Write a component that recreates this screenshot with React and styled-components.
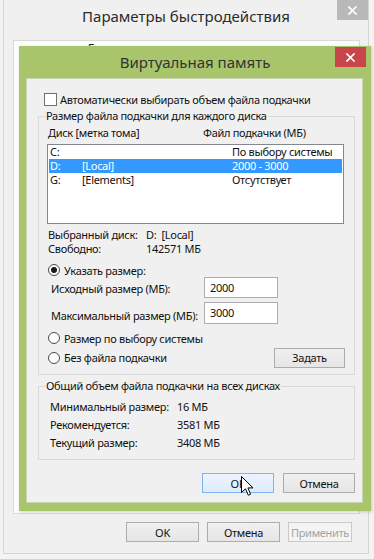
import React from 'react';
import styled, { createGlobalStyle } from 'styled-components';

const GlobalStyle = createGlobalStyle`
  html, body { margin: 0; padding: 0; background: #f3f3f3; }
  body {
    font-family: "Noto Sans", "Segoe UI", sans-serif;
    font-size: 11px;
    letter-spacing: -0.3px;
    color: #111;
  }
  * { box-sizing: border-box; }
`;

const Screen = styled.div`
  position: relative;
  width: 374px;
  height: 559px;
  overflow: hidden;
  background: #f3f3f3;
`;

const OuterWindow = styled.div`
  margin-left: 3px;
  width: 366px;
  height: 554px;
  border: 1px solid #d6d6d6;
  border-top: none;
  background: #f0f0f0;
  display: flex;
  flex-direction: column;
`;

const TitleBar = styled.div`
  height: ${p => p.$h}px;
  flex: none;
  display: grid;
  grid-template-columns: 1fr auto 1fr;
  align-items: start;
  padding: ${p => p.$pad};
`;

const WindowTitle = styled.div`
  grid-column: 2;
  font-size: 15px;
  letter-spacing: 0;
  line-height: ${p => p.$lh}px;
  color: ${p => p.$color};
  white-space: nowrap;
`;

const CloseButton = styled.div`
  grid-column: 3;
  justify-self: end;
  width: 31px;
  height: 20px;
  background: ${p => p.$bg};
  display: flex;
  align-items: center;
  justify-content: center;
`;

const TabArea = styled.div`
  padding: 0 8px 0 9px;
`;

const TabPanel = styled.div`
  height: 474px;
  border: 1px solid #d9d9d9;
  background: #fcfcfc;
  padding: 1px 0 0 74px;
`;

const TabCaption = styled.div`
  line-height: 12px;
  color: #222;
`;

const ButtonBar = styled.div`
  display: flex;
  justify-content: flex-end;
  gap: ${p => p.$gap}px;
  margin-top: ${p => p.$mt}px;
  padding-right: ${p => p.$pr}px;
`;

const Button = styled.div`
  width: ${p => p.$w}px;
  height: 20px;
  border: 1px solid ${p => (p.$hover ? '#7eb4ea' : p.$disabled ? '#cacaca' : '#acacac')};
  background: ${p =>
    p.$hover
      ? 'linear-gradient(#ecf4fc, #dcecfc)'
      : p.$disabled
      ? '#f4f4f4'
      : 'linear-gradient(#f0f0f0, #e5e5e5)'};
  color: ${p => (p.$disabled ? '#a3a3a3' : '#111')};
  display: flex;
  align-items: center;
  justify-content: center;
  line-height: 1;
`;

const Dialog = styled.div`
  position: absolute;
  left: 19px;
  top: 46px;
  width: 352px;
  height: 465px;
  background: #a8c56b;
  display: flex;
  flex-direction: column;
  box-shadow: 1px 1px 3px rgba(0, 0, 0, 0.18);
`;

const Client = styled.div`
  flex: 1;
  margin: 0 8px 8px 7px;
  background: #f0f0f0;
  border: 1px solid #c9d4b2;
  padding: 0 7px 0 11px;
  display: flex;
  flex-direction: column;
`;

const CheckRow = styled.label`
  margin-top: 12px;
  height: 16px;
  padding-left: 6px;
  display: flex;
  align-items: center;
  gap: 3px;
  white-space: nowrap;
`;

const CheckBox = styled.span`
  width: 13px;
  height: 13px;
  border: 1px solid #707070;
  background: #fff;
  flex: none;
`;

const Group = styled.fieldset`
  margin: ${p => p.$mt}px 0 0;
  padding: 0;
  border: 1px solid #d9d9d9;
  min-width: 0;
`;

const Legend = styled.legend`
  margin-left: 6px;
  padding: 0 1px;
  line-height: 16px;
  height: 16px;
  white-space: nowrap;
`;

const GroupBody = styled.div`
  padding: 0 ${p => p.$pr}px ${p => p.$pb}px 0;
  display: flex;
  flex-direction: column;
`;

const HeaderRow = styled.div`
  margin-top: 1px;
  height: 16px;
  line-height: 16px;
  padding-left: 9px;
  display: grid;
  grid-template-columns: 155px 1fr;
  white-space: nowrap;
`;

const ListBox = styled.div`
  margin: 3px 1px 0 8px;
  height: 80px;
  border: 1px solid #828790;
  background: #fff;
  overflow: hidden;
`;

const ListRow = styled.div`
  height: 14px;
  margin: 0 1px;
  padding-left: 1px;
  display: grid;
  grid-template-columns: 32px 150px 1fr;
  white-space: nowrap;
  background: ${p => (p.$selected ? '#3399ff' : 'transparent')};
  color: ${p => (p.$selected ? '#fff' : '#111')};
`;

const Cell = styled.span`
  display: block;
  height: 14px;
  line-height: 14px;
  overflow: hidden;
`;

const InfoRow = styled.div`
  margin-top: ${p => p.$mt || 0}px;
  height: ${p => p.$h}px;
  line-height: ${p => p.$h}px;
  padding-left: ${p => p.$pl}px;
  display: grid;
  grid-template-columns: ${p => p.$col}px 1fr;
  white-space: nowrap;
`;

const RadioRow = styled.div`
  margin-top: ${p => p.$mt}px;
  height: ${p => p.$h}px;
  padding-left: 9px;
  display: flex;
  align-items: center;
  justify-content: space-between;
`;

const RadioLabel = styled.label`
  display: flex;
  align-items: center;
  gap: 4px;
  white-space: nowrap;
`;

const Radio = styled.span`
  width: 12px;
  height: 12px;
  border-radius: 50%;
  border: 1px solid #4a4a4a;
  background: #fff;
  display: flex;
  align-items: center;
  justify-content: center;
  flex: none;
  &::after {
    content: '';
    width: 6px;
    height: 6px;
    border-radius: 50%;
    background: ${p => (p.$checked ? '#1a1a1a' : 'transparent')};
  }
`;

const InputRow = styled.div`
  margin-top: ${p => p.$mt}px;
  height: ${p => p.$h}px;
  padding-left: 12px;
  display: grid;
  grid-template-columns: 153px 74px;
  align-items: start;
`;

const InputLabel = styled.span`
  padding-top: ${p => p.$pt}px;
  line-height: 16px;
  white-space: nowrap;
`;

const TextBox = styled.div`
  height: ${p => p.$h}px;
  border: 1px solid #abadb3;
  background: #fff;
  padding: 2px 5px 0;
  line-height: 16px;
`;

const Cursor = styled.svg`
  position: absolute;
  left: 241px;
  top: 476px;
`;

const CloseGlyph = () => (
  <svg width="9" height="9" viewBox="0 0 9 9">
    <path d="M1 1 L8 8 M8 1 L1 8" stroke="#fff" strokeWidth="1.7" strokeLinecap="square" />
  </svg>
);

export default function App() {
  return (
    <Screen>
      <GlobalStyle />
      <OuterWindow>
        <TitleBar $h={40} $pad="0">
          <WindowTitle $lh={32} $color="#2b2b2b">Параметры быстродействия</WindowTitle>
          <CloseButton $bg="#b9b9b9"><CloseGlyph /></CloseButton>
        </TitleBar>
        <TabArea>
          <TabPanel>
            <TabCaption>Б</TabCaption>
          </TabPanel>
        </TabArea>
        <ButtonBar $gap={8} $mt={8} $pr={16}>
          <Button $w={73}>OK</Button>
          <Button $w={73}>Отмена</Button>
          <Button $w={64} $disabled>Применить</Button>
        </ButtonBar>
      </OuterWindow>

      <Dialog>
        <TitleBar $h={32} $pad="1px 5px 0 5px">
          <WindowTitle $lh={31} $color="#333">Виртуальная память</WindowTitle>
          <CloseButton $bg="#c8454a"><CloseGlyph /></CloseButton>
        </TitleBar>
        <Client>
          <CheckRow>
            <CheckBox />
            Автоматически выбирать объем файла подкачки
          </CheckRow>

          <Group $mt={1}>
            <Legend>Размер файла подкачки для каждого диска</Legend>
            <GroupBody $pr={9} $pb={7}>
              <HeaderRow>
                <span>Диск [метка тома]</span>
                <span>Файл подкачки (МБ)</span>
              </HeaderRow>
              <ListBox>
                <ListRow>
                  <Cell>C:</Cell><Cell></Cell><Cell>По выбору системы</Cell>
                </ListRow>
                <ListRow $selected>
                  <Cell>D:</Cell><Cell>[Local]</Cell><Cell>2000 - 3000</Cell>
                </ListRow>
                <ListRow>
                  <Cell>G:</Cell><Cell>[Elements]</Cell><Cell>Отсутствует</Cell>
                </ListRow>
              </ListBox>
              <InfoRow $mt={4} $h={14} $pl={9} $col={98}>
                <span>Выбранный диск:</span><span>D:&nbsp;&nbsp;[Local]</span>
              </InfoRow>
              <InfoRow $h={14} $pl={9} $col={98}>
                <span>Свободно:</span><span>142571 МБ</span>
              </InfoRow>
              <RadioRow $mt={7} $h={14}>
                <RadioLabel><Radio $checked />Указать размер:</RadioLabel>
              </RadioRow>
              <InputRow $mt={0} $h={21}>
                <InputLabel $pt={4}>Исходный размер (МБ):</InputLabel>
                <TextBox $h={21}>2000</TextBox>
              </InputRow>
              <InputRow $mt={4} $h={22}>
                <InputLabel $pt={6}>Максимальный размер (МБ):</InputLabel>
                <TextBox $h={22}>3000</TextBox>
              </InputRow>
              <RadioRow $mt={7} $h={14}>
                <RadioLabel><Radio />Размер по выбору системы</RadioLabel>
              </RadioRow>
              <RadioRow $mt={3} $h={19}>
                <RadioLabel><Radio />Без файла подкачки</RadioLabel>
                <Button $w={71}>Задать</Button>
              </RadioRow>
            </GroupBody>
          </Group>

          <Group $mt={3}>
            <Legend>Общий объем файла подкачки на всех дисках</Legend>
            <GroupBody $pr={0} $pb={7}>
              <InfoRow $mt={4} $h={18} $pl={11} $col={127}>
                <span>Минимальный размер:</span><span>16 МБ</span>
              </InfoRow>
              <InfoRow $h={18} $pl={11} $col={127}>
                <span>Рекомендуется:</span><span>3581 МБ</span>
              </InfoRow>
              <InfoRow $h={18} $pl={11} $col={127}>
                <span>Текущий размер:</span><span>3408 МБ</span>
              </InfoRow>
            </GroupBody>
          </Group>

          <ButtonBar $gap={9} $mt={13} $pr={0}>
            <Button $w={72} $hover>OK</Button>
            <Button $w={72}>Отмена</Button>
          </ButtonBar>
        </Client>
      </Dialog>

      <Cursor width="13" height="21" viewBox="0 0 13 21">
        <path d="M0.5 0.5 L0.5 16.5 L4.5 12.8 L7.3 19.2 L9.6 18.2 L6.9 11.9 L12 11.9 Z" fill="#fff" stroke="#000" strokeWidth="1" strokeLinejoin="miter" />
      </Cursor>
    </Screen>
  );
}
